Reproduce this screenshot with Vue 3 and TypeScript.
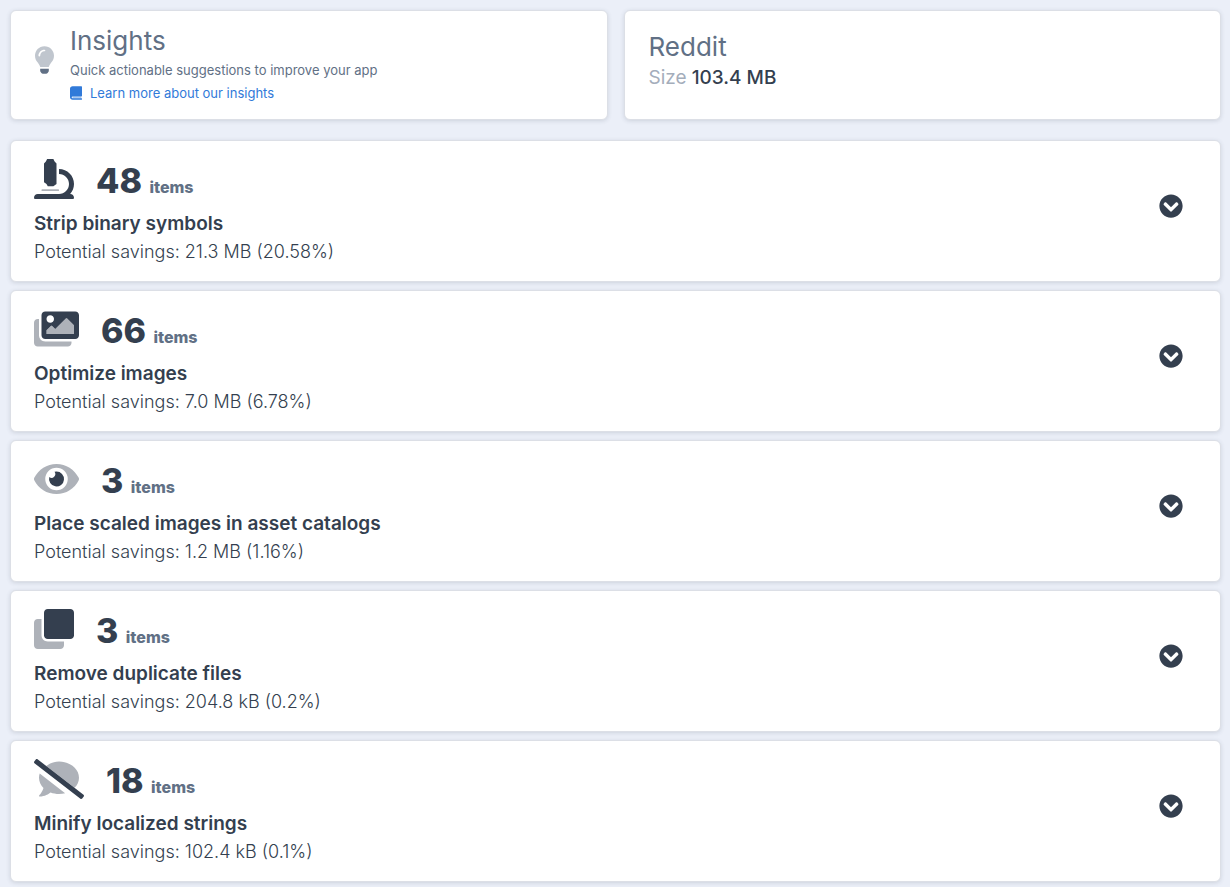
<script setup lang="ts">
import { ref } from 'vue'

interface Insight {
  id: string
  width: number
  secondary: string
  primary: string
  count: number
  title: string
  savings: string
}

const insights: Insight[] = [
  {
    id: 'symbols',
    width: 512,
    secondary: 'M104 410h208c4.42 0 8-3.58 8-8v-8c0-4.42-3.58-8-8-8H104c-4.42 0-8 3.58-8 8v8c0 4.42 3.58 8 8 8z',
    primary:
      'M160 320l16 28h72l40-28V56l-24-24-16-32h-80l-16 32-24 24v240zM464 448h-1.29C493.24 413.99 512 369.2 512 320c0-105.88-86.12-192-192-192v64c70.58 0 128 57.42 128 128s-57.42 128-128 128H48c-26.51 0-48 21.49-48 48 0 8.84 7.16 16 16 16h480c8.84 0 16-7.16 16-16 0-26.51-21.49-48-48-48z',
    count: 48,
    title: 'Strip binary symbols',
    savings: '21.3 MB (20.58%)',
  },
  {
    id: 'images',
    width: 576,
    secondary:
      'M480 416v16c0 26.51-21.49 48-48 48H48c-26.51 0-48-21.49-48-48V176c0-26.51 21.49-48 48-48h16v208c0 44.112 35.888 80 80 80h336zM160 272l55.515-55.515c4.686-4.686 12.284-4.686 16.971 0L272 256l135.515-135.515c4.686-4.686 12.284-4.686 16.971 0L512 208v112H160v-48z',
    primary:
      'M576 336V80c0-26.51-21.49-48-48-48H144c-26.51 0-48 21.49-48 48v256c0 26.51 21.49 48 48 48h384c26.51 0 48-21.49 48-48zM256 128c0 26.51-21.49 48-48 48s-48-21.49-48-48 21.49-48 48-48 48 21.49 48 48zm-96 144l55.515-55.515c4.686-4.686 12.284-4.686 16.971 0L272 256l135.515-135.515c4.686-4.686 12.284-4.686 16.971 0L512 208v112H160v-48z',
    count: 66,
    title: 'Optimize images',
    savings: '7.0 MB (6.78%)',
  },
  {
    id: 'catalogs',
    width: 576,
    secondary:
      'M572.52 241.4C518.29 135.59 410.93 64 288 64S57.68 135.64 3.48 241.41a32.35 32.35 0 0 0 0 29.19C57.71 376.41 165.07 448 288 448s230.32-71.64 284.52-177.41a32.35 32.35 0 0 0 0-29.19zM288 400a144 144 0 1 1 144-144 143.93 143.93 0 0 1-144 144z',
    primary: 'M288 160a95.31 95.31 0 0 0-25.31 3.79 47.85 47.85 0 0 1-66.9 66.9A95.78 95.78 0 1 0 288 160z',
    count: 3,
    title: 'Place scaled images in asset catalogs',
    savings: '1.2 MB (1.16%)',
  },
  {
    id: 'duplicates',
    width: 512,
    secondary:
      'M176 416c-44.112 0-80-35.888-80-80V128H48c-26.51 0-48 21.49-48 48v288c0 26.51 21.49 48 48 48h288c26.51 0 48-21.49 48-48v-48H176z',
    primary: 'M464 0c26.51 0 48 21.49 48 48v288c0 26.51-21.49 48-48 48H176c-26.51 0-48-21.49-48-48V48c0-26.51 21.49-48 48-48h288z',
    count: 3,
    title: 'Remove duplicate files',
    savings: '204.8 kB (0.2%)',
  },
  {
    id: 'strings',
    width: 640,
    secondary:
      'M64 240c0 49.6 21.4 95 57 130.7-12.6 50.3-54.3 95.2-54.8 95.8-2.2 2.3-2.8 5.7-1.5 8.7 1.3 2.9 4.1 4.8 7.3 4.8 66.3 0 116-31.8 140.6-51.4 32.7 12.3 69 19.4 107.4 19.4 27.4 0 53.7-3.6 78.4-10L72.9 186.4c-5.6 17.1-8.9 35-8.9 53.6zM157.2 89.7C202.3 53.8 258.9 32 320 32c141.4 0 256 93.1 256 208 0 49.2-21.4 94.1-56.9 129.4z',
    primary:
      'M633.82 458.1L45.46 3.37C38.49-2.05 28.43-.8 23.01 6.18L3.37 31.45C-2.05 38.42-.8 48.47 6.18 53.9l588.36 454.73c6.98 5.43 17.03 4.17 22.46-2.81l19.64-25.27c5.41-6.97 4.16-17.02-2.82-22.45z',
    count: 18,
    title: 'Minify localized strings',
    savings: '102.4 kB (0.1%)',
  },
]

const selected = ref<string | null>(null)

function toggle(id: string): void {
  selected.value = selected.value === id ? null : id
}
</script>

<template>
  <main class="page">
    <header class="summary">
      <section class="card intro">
        <svg class="bulb" viewBox="0 0 352 512" aria-hidden="true">
          <path class="bulb-glass" d="M0 176c0 44.37 16.45 84.85 43.56 115.78 16.52 18.85 42.36 58.23 52.21 91.45.04.26.07.52.11.78h160.24c.04-.26.07-.51.11-.78 9.85-33.22 35.69-72.6 52.21-91.45C335.55 260.85 352 220.37 352 176 352 78.61 272.91-.3 175.45 0 73.44.31 0 82.97 0 176zm176-80c-44.11 0-80 35.89-80 80 0 8.84-7.16 16-16 16s-16-7.16-16-16c0-61.76 50.24-112 112-112 8.84 0 16 7.16 16 16s-7.16 16-16 16z" />
          <path d="M96.06 454.35c.01 6.29 1.87 12.45 5.36 17.69l17.09 25.69a31.99 31.99 0 0 0 26.64 14.28h61.71a31.99 31.99 0 0 0 26.64-14.28l17.09-25.69a31.989 31.989 0 0 0 5.36-17.69l.04-38.35H96.01l.05 38.35z" />
        </svg>
        <div>
          <h1 class="heading">Insights</h1>
          <p class="lead">Quick actionable suggestions to improve your app</p>
          <a class="learn" href="#insights">
            <svg class="book" viewBox="0 0 448 512" aria-hidden="true">
              <path class="book-pages" d="M96 384h328v64l-8 16H96z" />
              <path d="M448 360V24c0-13.3-10.7-24-24-24H96C43 0 0 43 0 96v320c0 53 43 96 96 96h328c13.3 0 24-10.7 24-24v-16c0-7.5-3.5-14.3-8.9-18.7H96c-42 0-42-69.3 0-69.3h328c13.3 0 24-10.7 24-24z" />
            </svg>
            <span>Learn more about our insights</span>
          </a>
        </div>
      </section>
      <section class="card app">
        <h2 class="heading">Reddit</h2>
        <p class="size"><span class="size-label">Size</span> 103.4 MB</p>
      </section>
    </header>

    <section id="insights" class="list">
      <article v-for="item in insights" :key="item.id" class="card insight">
        <div>
          <div class="stat">
            <svg class="icon" :viewBox="`0 0 ${item.width} 512`" aria-hidden="true">
              <path class="icon-soft" :d="item.secondary" />
              <path :d="item.primary" />
            </svg>
            <p class="count">{{ item.count }} <span class="unit">items</span></p>
          </div>
          <h3 class="title">{{ item.title }}</h3>
          <p class="savings">Potential savings: {{ item.savings }}</p>
        </div>
        <button
          class="toggle"
          type="button"
          :aria-label="`Show details for ${item.title}`"
          :aria-pressed="selected === item.id"
          @click="toggle(item.id)"
        >
          <svg viewBox="0 0 512 512" aria-hidden="true">
            <path d="M504 256c0 137-111 248-248 248S8 393 8 256 119 8 256 8s248 111 248 248zM273 369.9l135.5-135.5c9.4-9.4 9.4-24.6 0-33.9l-17-17c-9.4-9.4-24.6-9.4-33.9 0L256 285.1 154.5 183.6c-9.4-9.4-24.6-9.4-33.9 0l-17 17c-9.4 9.4-9.4 24.6 0 33.9L239 369.9c9.4 9.4 24.6 9.4 34 0z" />
          </svg>
        </button>
      </article>
    </section>
  </main>
</template>

<style>
body {
  margin: 0;
  background: #ebeff8;
}
</style>

<style scoped>
.page {
  padding: 10px 9px 5px 10px;
  font-family: Inter, "Liberation Sans", sans-serif;
  color: #343f4f;
}

h1,
h2,
h3,
p {
  margin: 0;
}

svg {
  display: block;
  fill: currentColor;
}

.card {
  box-sizing: border-box;
  background: #fff;
  border: 1px solid #dcdfe6;
  border-radius: 6px;
  box-shadow: 0 1px 4px rgba(50, 60, 80, 0.16);
}

.summary {
  display: grid;
  grid-template-columns: 1fr 1fr;
  gap: 16px;
  margin-bottom: 20px;
}

.intro {
  display: flex;
  align-items: flex-start;
  gap: 16px;
  padding: 12px 24px 14px;
  color: #617085;
}

.bulb {
  width: 19px;
  height: 28px;
  margin-top: 23px;
}

.bulb-glass {
  opacity: 0.4;
}

.heading {
  font-size: 26px;
  line-height: 36px;
  font-weight: 400;
  color: #617085;
}

.lead {
  font-size: 13px;
  line-height: 22px;
}

.learn {
  display: flex;
  align-items: center;
  gap: 8px;
  font-size: 13px;
  line-height: 24px;
  color: #317ad9;
  text-decoration: none;
}

.book {
  width: 12px;
  height: 14px;
}

.book-pages {
  opacity: 0.4;
}

.app {
  padding: 18px 24px;
}

.size {
  font-size: 19px;
  line-height: 26px;
  font-weight: 500;
}

.size-label {
  font-weight: 400;
  color: #a4adbb;
}

.list {
  display: grid;
  gap: 8px;
}

.insight {
  display: flex;
  align-items: flex-start;
  justify-content: space-between;
  padding: 18px 37px 15px 23px;
}

.stat {
  display: flex;
  gap: 22px;
  margin-bottom: 11px;
}

.icon {
  height: 40px;
}

.icon-soft {
  opacity: 0.4;
}

.count {
  font-size: 34px;
  line-height: 44px;
  height: 40px;
  font-weight: 800;
}

.unit {
  font-size: 16px;
  color: #617085;
}

.title {
  font-size: 19px;
  line-height: 28px;
  font-weight: 600;
}

.savings {
  font-size: 18px;
  line-height: 28px;
  font-weight: 300;
}

.toggle {
  width: 24px;
  height: 24px;
  margin-top: 35px;
  padding: 0;
  border: 0;
  background: none;
  color: inherit;
  cursor: pointer;
}
</style>
